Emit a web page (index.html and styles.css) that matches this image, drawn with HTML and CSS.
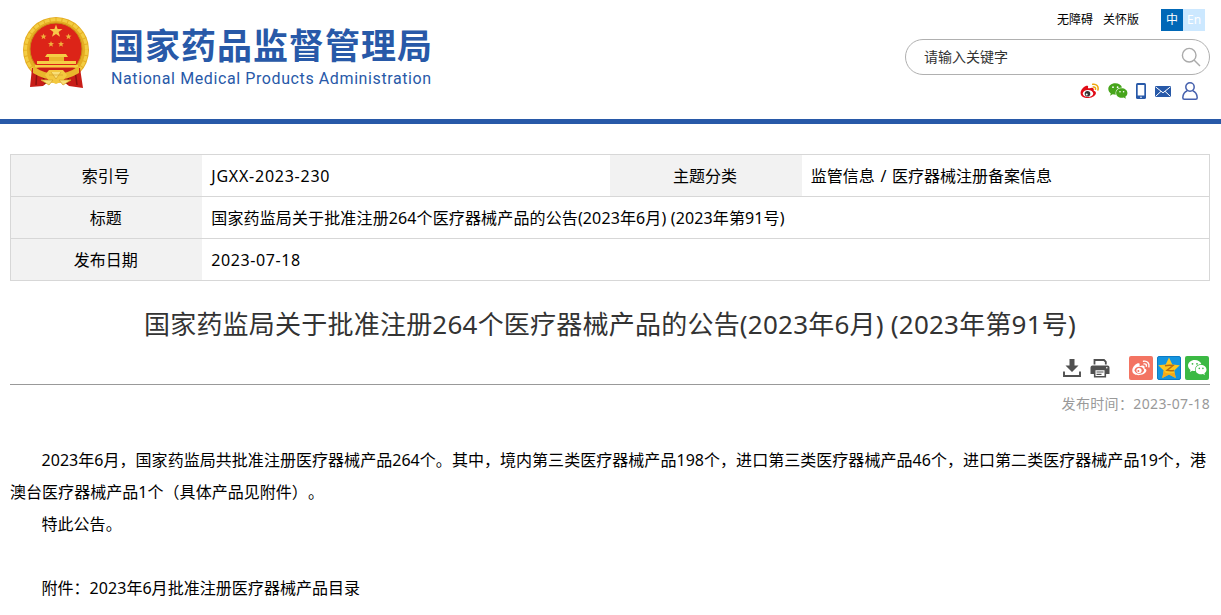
FILE: index.html
```html
<!DOCTYPE html>
<html lang="zh-CN">
<head>
    <meta charset="UTF-8">
    <meta name="viewport" content="width=device-width, initial-scale=1.0">
    <title>国家药监局关于批准注册264个医疗器械产品的公告(2023年6月) (2023年第91号)</title>
    <link rel="stylesheet" href="styles.css">
</head>
<body>
    <!-- 页头 -->
    <header class="header">
        <a class="logo" href="#">
            <svg class="emblem" viewBox="0 0 68 74" width="68" height="74">
                <circle cx="33" cy="34" r="33" fill="#e5ad22"/>
                <circle cx="33" cy="34" r="30.5" fill="none" stroke="#f3cd42" stroke-width="3" stroke-dasharray="5 1"/>
                <circle cx="33" cy="33" r="26" fill="#dc2418" stroke="#c98c17" stroke-width="1"/>
                <path d="M9 52 L57 52 L60 72 L46 70 L41 66 L25 66 L20 70 L7 71z" fill="#c81d18"/>
                <path d="M14 54 L13 69 M19 56 L22 68 M52 54 L54 69 M47 56 L44 68" stroke="#8f120f" stroke-width="1.5"/>
                <path d="M33 8.500l1.600 4.600h4.900l-3.900 2.900 1.400 4.800-4-2.800-4 2.800 1.400-4.800-3.900-2.900h4.900z" fill="#f8c84a"/>
                <g fill="#f0b03c">
                    <path id="star" d="M20.500 17.500l.8 2.100 2.200.1-1.700 1.400.6 2.200-1.900-1.200-1.900 1.200.6-2.200-1.700-1.400 2.200-.1z"/>
                    <use href="#star" x="25"/>
                    <use href="#star" x="7.500" y="7.500"/>
                    <use href="#star" x="17.500" y="7.500"/>
                </g>
                <path d="M24 38h19l2 3H22zM26 41h15v4H26zM14 45h39v3H14zM12 49h43v2.500H12z" fill="#f5cd45"/>
                <path d="M26 41h15v4H26z" fill="#e9b62c"/>
                <path d="M10 50Q33 66 56 50L56 57Q33 71 10 57z" fill="#e9b62c"/>
                <path d="M22 59l4-5h14l4 5-4 6-7 3-7-3z" fill="#f3c83f"/>
                <path d="M26 59l14 0M28 56l5 7 5-7M18 64l12 0-4 5zM48 64l-12 0 4 5z" fill="#f8df78" stroke="#d9a52a" stroke-width=".8"/>
            </svg>
            <span class="logo-text">
                <span class="logo-cn">国家药品监督管理局</span>
                <span class="logo-en">National Medical Products Administration</span>
            </span>
        </a>

        <div class="tools">
            <div class="top-links">
                <a href="#">无障碍</a>
                <a href="#">关怀版</a>
                <div class="lang">
                    <a class="lang-cn" href="#">中</a>
                    <a class="lang-en" href="#">En</a>
                </div>
            </div>
            <form class="search">
                <input type="text" placeholder="请输入关键字">
                <svg viewBox="0 0 20 20" width="20" height="20" fill="none" stroke="#aaa" stroke-width="1.4">
                    <circle cx="8.200" cy="8.200" r="6.800"/>
                    <path d="M13 13l6 6"/>
                </svg>
            </form>
            <div class="media">
                <!-- 微博 -->
                <svg viewBox="0 0 20 16" width="20" height="16">
                    <path d="M8 4.500C9 2.200 6 2 3.400 4.500 .8 7 .3 9 .7 11c.6 3 4 4.200 7.500 4 4.800-.3 8-3 7.700-5.300-.2-1.300-1.600-1.700-2.200-1.900.6-2.400-.5-4-4-2.600-.8.300-1.900.200-1.700-.700z" fill="#e00b16"/>
                    <ellipse cx="8" cy="10.500" rx="5.200" ry="3.600" fill="#fff"/>
                    <circle cx="7.500" cy="10.800" r="2.800" fill="#333"/>
                    <circle cx="6.700" cy="11.500" r="1" fill="#fff"/>
                    <path d="M12.700 1.300c3.500-.8 6.300 2 5.200 5.700M13.200 4c1.800-.3 2.700.8 2.300 2.300" fill="none" stroke="#f0a70c" stroke-width="1.500" stroke-linecap="round"/>
                </svg>
                <!-- 微信 -->
                <svg viewBox="0 0 20 16" width="20" height="16">
                    <path d="M7.300.3C3.300.3.300 2.900.300 6c0 1.900 1 3.400 2.500 4.400L2 12.700l2.700-1.400c1 .3 2 .4 3.100.4-1-4.400 2-7.200 6.200-7.200C13.400 2 10.700.3 7.300.3z" fill="#47a51b"/>
                    <path d="M13.700 5.300c-3.200 0-5.600 2-5.600 4.700s2.400 4.800 5.600 4.800c.7 0 1.300-.1 2-.3l2.200 1.200-.6-1.900c1.300-.9 2.100-2.200 2.100-3.800 0-2.600-2.500-4.700-5.700-4.700z" fill="#47a51b"/>
                    <g fill="#fff"><circle cx="5" cy="4.200" r=".9"/><circle cx="9.600" cy="4.200" r=".9"/><circle cx="12" cy="8.700" r=".8"/><circle cx="15.600" cy="8.700" r=".8"/></g>
                </svg>
                <svg viewBox="0 0 10 16" width="10" height="16">
                    <rect width="10" height="16" rx="1.500" fill="#2859a8"/>
                    <path d="M1.700 2h6.600v10.500H1.700z" fill="#fff"/>
                    <circle cx="5" cy="14.200" r=".8" fill="#fff"/>
                </svg>
                <svg viewBox="0 0 16 11" width="16" height="11">
                    <rect width="16" height="11" fill="#2859a8"/>
                    <path d="M.5.8L8 6.800 15.500.8M.5 10.500L6 5.300M15.500 10.500L10 5.300" fill="none" stroke="#fff" stroke-width="1"/>
                </svg>
                <svg viewBox="0 0 16 18" width="16" height="18" fill="none" stroke="#4560ad" stroke-width="1.500">
                    <circle cx="8" cy="5" r="4.200"/>
                    <path d="M5.300 8.700C2.300 9.900.9 12.500.8 15.700c0 1 .5 1.500 1.500 1.500h11.400c1 0 1.500-.5 1.500-1.500-.1-3.200-1.500-5.800-4.500-7"/>
                </svg>
            </div>
        </div>
    </header>

    <div class="container">
        <!-- 索引信息 -->
        <table class="info">
            <tr>
                <th>索引号</th>
                <td class="index-no">JGXX-2023-230</td>
                <th>主题分类</th>
                <td class="category">监管信息 / 医疗器械注册备案信息</td>
            </tr>
            <tr>
                <th>标题</th>
                <td colspan="3">国家药监局关于批准注册264个医疗器械产品的公告(2023年6月) (2023年第91号)</td>
            </tr>
            <tr>
                <th>发布日期</th>
                <td class="date" colspan="3">2023-07-18</td>
            </tr>
        </table>

        <h2 class="title">国家药监局关于批准注册264个医疗器械产品的公告(2023年6月) (2023年第91号)</h2>

        <!-- 下载、打印、分享 -->
        <div class="share">
            <svg class="download" viewBox="0 0 18 18" width="18" height="18">
                <path d="M6.500 0h5v6.500h4L9 13 2.500 6.500h4z" fill="#505050"/>
                <path d="M1 12.500V17h16v-4.500" fill="none" stroke="#505050" stroke-width="1.900"/>
            </svg>
            <svg class="print" viewBox="0 0 20 19" width="20" height="19">
                <path d="M4.500 5.500v-4.500h9.500l1.800 1.800v2.700" fill="none" stroke="#505050" stroke-width="1.800"/>
                <path d="M2.500 6.500h15Q19.500 6.500 19.500 8.500v6.500H16v-4H4v4H.5V8.500Q.5 6.500 2.500 6.500z" fill="#505050"/>
                <path d="M4.700 10.500h10.600v7.200H4.700z" fill="#fff" stroke="#505050" stroke-width="1.600"/>
                <path d="M6.500 13h7M6.500 15.300h5" stroke="#505050" stroke-width="1.200"/>
                <circle cx="16.800" cy="8.700" r=".8" fill="#fff"/>
            </svg>
            <svg viewBox="0 0 24 24" width="24" height="24">
                <rect width="24" height="24" rx="2" fill="#f37462"/>
                <path d="M10.500 9C11.500 6.800 8.500 6.500 6 9s-3 4.500-2.600 6.500c.6 3 4 3.800 7.100 3.600 4.300-.3 7.200-2.700 6.900-5-.2-1.200-1.300-1.500-1.900-1.700.6-2.200-.6-3.500-3.600-2.500-.8.300-1.600 0-1.400-.9z" fill="#fff"/>
                <ellipse cx="10.300" cy="14.300" rx="4.700" ry="3.500" fill="#f37462"/>
                <circle cx="10" cy="14.500" r="2.600" fill="#fff"/>
                <circle cx="9.400" cy="15" r="1" fill="#f37462"/>
                <path d="M14.500 5.300c3.600-.8 6.400 2 5.400 5.600M15 7.900c1.700-.3 2.700.7 2.300 2.300" fill="none" stroke="#fff" stroke-width="1.400" stroke-linecap="round"/>
            </svg>
            <svg viewBox="0 0 24 24" width="24" height="24">
                <rect x=".5" y=".5" width="23" height="23" rx="1.500" fill="#1494df" stroke="#0b7bc4"/>
                <path d="M12 1.500l3.300 6.900 7.500.9-5.500 5.200 1.400 7.500L12 18.400 5.300 22l1.400-7.500-5.500-5.200 7.500-.9z" fill="#fcc621"/>
                <path d="M6.700 14.500L5.300 22 12 18.400l6.700 3.600-1-5.300q-5 1.300-9 .3z" fill="#f5a81a"/>
                <path d="M8 9.700q4-1 8-.2L10 14.300q3.500.7 7 .1" fill="none" stroke="#b86c10" stroke-width="1.500"/>
            </svg>
            <svg viewBox="0 0 24 24" width="24" height="24">
                <rect width="24" height="24" rx="2" fill="#3bb944"/>
                <path d="M9.800 4C6 4 3 6.500 3 9.600c0 1.800 1 3.300 2.500 4.300l-.7 2.100 2.500-1.300c.9.200 1.800.4 2.800.4-.8-4.300 2.500-6.900 6.300-6.800C15.800 5.700 13 4 9.800 4z" fill="#fff"/>
                <path d="M16 9c-3 0-5.400 2-5.400 4.700S13 18.300 16 18.300c.7 0 1.300-.1 1.900-.3l2.100 1.100-.6-1.800c1.300-.9 2.100-2.100 2.100-3.600C21.500 11 19 9 16 9z" fill="#fff"/>
                <g fill="#3bb944"><circle cx="7.500" cy="7.800" r=".9"/><circle cx="12" cy="7.800" r=".9"/><circle cx="14.300" cy="12.400" r=".8"/><circle cx="17.900" cy="12.400" r=".8"/></g>
            </svg>
        </div>
        <div class="pub-time">发布时间：2023-07-18</div>

        <!-- 正文 -->
        <div class="article">
            <p>2023年6月，国家药监局共批准注册医疗器械产品264个。其中，境内第三类医疗器械产品198个，进口第三类医疗器械产品46个，进口第二类医疗器械产品19个，港澳台医疗器械产品1个（具体产品见附件）。</p>
            <p>特此公告。</p>
            <p class="attachment">附件：2023年6月批准注册医疗器械产品目录</p>
        </div>
    </div>
</body>
</html>
```
FILE: styles.css
```css
* {
    box-sizing: border-box;
}

body {
    margin: 0;
    background: #fff;
    color: #000;
    font-family: "Noto Sans", "Noto Sans CJK SC", sans-serif;
    font-size: 16px;
    overflow: hidden;
    text-spacing-trim: space-all;
}

a {
    color: inherit;
    text-decoration: none;
}

svg {
    display: block;
    flex: none;
}

/* 页头 */
.header {
    display: flex;
    justify-content: space-between;
    height: 124px;
    padding: 0 11px 0 23px;
    border-bottom: 5px solid #2859a8;
}

.logo {
    display: flex;
    padding-top: 16px;
    color: #2859a8;
}

.logo-text {
    display: flex;
    flex-direction: column;
    padding: 8px 0 0 18px;
    white-space: nowrap;
}

.logo-cn {
    font-family: "Noto Sans CJK SC", sans-serif;
    font-size: 35px;
    font-weight: 700;
    letter-spacing: 1px;
    line-height: 40px;
}

.logo-en {
    padding-left: 2px;
    font-family: Roboto, sans-serif;
    font-size: 16px;
    letter-spacing: 0.6px;
    line-height: 29px;
}

.tools {
    width: 305px;
}

.top-links {
    display: flex;
    justify-content: flex-end;
    gap: 10px;
    padding: 9px 5px 0 0;
    font-size: 12px;
    line-height: 22px;
}

.lang {
    display: flex;
    margin-left: 12px;
    color: #fff;
    text-align: center;
}

.lang a {
    width: 22px;
}

.lang-cn {
    background: #0068b7;
}

.lang-en {
    background: #cce8ff;
}

.search {
    display: flex;
    align-items: center;
    height: 36px;
    margin-top: 8px;
    padding: 0 8px 0 18px;
    border: 1px solid #b0b0b0;
    border-radius: 18px;
}

.search input {
    flex: 1;
    padding: 0 0 2px;
    border: 0;
    outline: none;
    background: none;
    font: 14px "Noto Sans CJK SC", sans-serif;
}

.search input::placeholder {
    color: #333;
}

.media {
    display: flex;
    align-items: center;
    justify-content: flex-end;
    gap: 8px;
    padding: 7px 12px 0 0;
}

.media svg:nth-child(n+4) {
    margin-left: 1px;
}

.media svg:last-child {
    margin-left: 3px;
}

/* 索引信息 */
.container {
    width: 1200px;
    margin: 30px 0 0 10px;
}

.info {
    width: 100%;
    border: 1px solid #d7d7d7;
    border-collapse: collapse;
    table-layout: fixed;
}

.info th,
.info td {
    height: 42px;
    padding: 0 9px;
    border-bottom: 1px solid #d7d7d7;
    letter-spacing: 0.13px;
    line-height: 24px;
}

.info th {
    width: 16%;
    padding-right: 11px;
    background: #f2f2f2;
    font-weight: 400;
    letter-spacing: 0;
    text-align: center;
}

.info .index-no {
    letter-spacing: 0.75px;
}

.info .date {
    letter-spacing: 0.6px;
}

.info .category {
    letter-spacing: 0;
    word-spacing: 1.5px;
}

/* 标题 */
.title {
    margin: 23px 0 0;
    color: #333;
    font-size: 26px;
    font-weight: 400;
    letter-spacing: 0.22px;
    line-height: 40px;
    text-align: center;
    white-space: nowrap;
}

.share {
    display: flex;
    align-items: center;
    justify-content: flex-end;
    gap: 4px;
    height: 41px;
    padding: 8px 1px 0 0;
    border-bottom: 1px solid #999;
}

.download {
    margin-right: 5px;
}

.print {
    margin-right: 15px;
}

.pub-time {
    color: #999;
    font-size: 14px;
    letter-spacing: 0.36px;
    line-height: 38px;
    text-align: right;
}

/* 正文 */
.article {
    margin-top: 21px;
    letter-spacing: 0.04px;
    line-height: 32px;
}

.article p {
    margin: 0;
    text-indent: 31.5px;
}

.article .attachment {
    margin-top: 32px;
}
```
